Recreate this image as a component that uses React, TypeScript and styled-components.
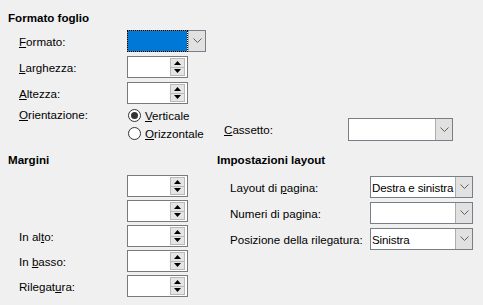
import React from "react";
import styled, { createGlobalStyle } from "styled-components";

const Global = createGlobalStyle`
  html, body { margin: 0; padding: 0; background: #f0f0f0; }
  body {
    font-family: "Liberation Sans", Arial, sans-serif;
    font-size: 11.6px;
    color: #000;
  }
`;

const Page = styled.div`
  width: 483px;
  height: 305px;
  background: #f0f0f0;
  padding: 10px 0 0 8px;
  box-sizing: border-box;
  display: flex;
  flex-direction: column;
`;

const Header = styled.div`
  font-weight: bold;
  height: 15px;
  line-height: 15px;
  white-space: nowrap;
`;

const FormGrid = styled.div`
  display: grid;
  grid-template-columns: 108px auto;
  margin-left: 11px;
  margin-top: 5px;
  row-gap: 4px;
  align-items: center;
`;

const Label = styled.div<{ $top?: boolean }>`
  white-space: nowrap;
  line-height: 15px;
  align-self: ${(p) => (p.$top ? "start" : "center")};
  margin-top: ${(p) => (p.$top ? "-1px" : "0")};
`;

const U = styled.span`
  text-decoration: underline;
  text-underline-offset: 1px;
`;

const SpinBox = styled.div`
  width: 61px;
  height: 22px;
  box-sizing: border-box;
  border: 1px solid #7a7a7a;
  background: #fff;
  display: flex;
  justify-content: flex-end;
  padding: 1px 2px 1px 0;
`;

const SpinButtons = styled.div`
  width: 15px;
  display: flex;
  flex-direction: column;
`;

const SpinBtn = styled.div`
  flex: 1;
  background: #e5e5e5;
  border: 1px solid #b9b9b9;
  box-sizing: border-box;
  display: flex;
  align-items: center;
  justify-content: center;
  & + & { border-top: none; }
`;

const Combo = styled.div<{ $w: number; $h: number }>`
  width: ${(p) => p.$w}px;
  height: ${(p) => p.$h}px;
  box-sizing: border-box;
  border: 1px solid #7a7e86;
  background: #fff;
  display: flex;
`;

const ComboField = styled.div<{ $focus?: boolean }>`
  flex: 1;
  display: flex;
  align-items: center;
  padding-left: 1px;
  white-space: nowrap;
  overflow: hidden;
  letter-spacing: -0.15px;
  ${(p) =>
    p.$focus
      ? `background: #0078d7; background-clip: padding-box; border: 1px dotted #000; margin: -1px 0 -1px -1px;`
      : ``}
`;

const ComboBtn = styled.div`
  width: 16px;
  background: #e1e1e1;
  border-left: 1px solid #adadad;
  display: flex;
  align-items: center;
  justify-content: center;
`;

const OrientRow = styled.div`
  display: flex;
  align-items: flex-end;
  margin-top: -2px;
`;

const RadioGroup = styled.div`
  width: 97px;
  display: flex;
  flex-direction: column;
`;

const RadioItem = styled.div`
  height: 18px;
  display: flex;
  align-items: center;
  gap: 4px;
  white-space: nowrap;
`;

const RadioCircle = styled.span<{ $checked?: boolean }>`
  width: 13px;
  height: 13px;
  box-sizing: border-box;
  border-radius: 50%;
  border: 1px solid #333;
  background: #fff;
  display: inline-flex;
  align-items: center;
  justify-content: center;
  margin-left: 1px;
  &::after {
    content: "";
    width: 7px;
    height: 7px;
    border-radius: 50%;
    background: ${(p) => (p.$checked ? "#333" : "transparent")};
  }
`;

const TrayBlock = styled.div`
  display: flex;
  align-items: center;
  margin-bottom: 1px;
`;

const TrayLabel = styled.div`
  width: 124px;
  white-space: nowrap;
`;

const Bottom = styled.div`
  display: flex;
  margin-top: 10px;
`;

const LeftCol = styled.div`
  width: 209px;
  display: flex;
  flex-direction: column;
`;

const RightCol = styled.div`
  display: flex;
  flex-direction: column;
`;

const MarginGrid = styled(FormGrid)`
  margin-top: 8px;
  row-gap: 3px;
`;

const LayoutGrid = styled.div`
  display: grid;
  grid-template-columns: 140px auto;
  margin-left: 13px;
  margin-top: 9px;
  row-gap: 4px;
  align-items: center;
`;

const Chevron = () => (
  <svg width="9" height="6" viewBox="0 0 9 6">
    <polyline points="0.5,0.5 4.5,4.5 8.5,0.5" fill="none" stroke="#606060" strokeWidth="1" />
  </svg>
);

const Tri = ({ up }: { up?: boolean }) => (
  <svg width="7" height="4" viewBox="0 0 7 4">
    <polygon points={up ? "3.5,0 7,4 0,4" : "0,0 7,0 3.5,4"} fill="#000" />
  </svg>
);

const Spin = () => (
  <SpinBox>
    <SpinButtons>
      <SpinBtn>
        <Tri up />
      </SpinBtn>
      <SpinBtn>
        <Tri />
      </SpinBtn>
    </SpinButtons>
  </SpinBox>
);

const ComboBox = ({
  w,
  h = 22,
  text,
  focus,
}: {
  w: number;
  h?: number;
  text?: string;
  focus?: boolean;
}) => (
  <Combo $w={w} $h={h}>
    <ComboField $focus={focus}>{text}</ComboField>
    <ComboBtn>
      <Chevron />
    </ComboBtn>
  </Combo>
);

export default function App() {
  return (
    <>
      <Global />
      <Page>
        <Header>Formato foglio</Header>
        <FormGrid>
          <Label>
            <U>F</U>ormato:
          </Label>
          <ComboBox w={79} focus />
          <Label>
            <U>L</U>arghezza:
          </Label>
          <Spin />
          <Label>
            <U>A</U>ltezza:
          </Label>
          <Spin />
          <Label $top>
            <U>O</U>rientazione:
          </Label>
          <OrientRow>
            <RadioGroup>
              <RadioItem>
                <RadioCircle $checked />
                <span>
                  <U>V</U>erticale
                </span>
              </RadioItem>
              <RadioItem>
                <RadioCircle />
                <span>
                  <U>O</U>rizzontale
                </span>
              </RadioItem>
            </RadioGroup>
            <TrayBlock>
              <TrayLabel>
                <U>C</U>assetto:
              </TrayLabel>
              <ComboBox w={105} h={23} />
            </TrayBlock>
          </OrientRow>
        </FormGrid>
        <Bottom>
          <LeftCol>
            <Header>Margini</Header>
            <MarginGrid>
              <Label />
              <Spin />
              <Label />
              <Spin />
              <Label>
                In al<U>t</U>o:
              </Label>
              <Spin />
              <Label>
                In <U>b</U>asso:
              </Label>
              <Spin />
              <Label>
                Rilegat<U>u</U>ra:
              </Label>
              <Spin />
            </MarginGrid>
          </LeftCol>
          <RightCol>
            <Header>Impostazioni layout</Header>
            <LayoutGrid>
              <Label>
                Layout di <U>p</U>agina:
              </Label>
              <ComboBox w={103} text="Destra e sinistra" />
              <Label>
                Numeri di pa<U>g</U>ina:
              </Label>
              <ComboBox w={103} />
              <Label>Posizione della rilegatura:</Label>
              <ComboBox w={103} text="Sinistra" />
            </LayoutGrid>
          </RightCol>
        </Bottom>
      </Page>
    </>
  );
}
